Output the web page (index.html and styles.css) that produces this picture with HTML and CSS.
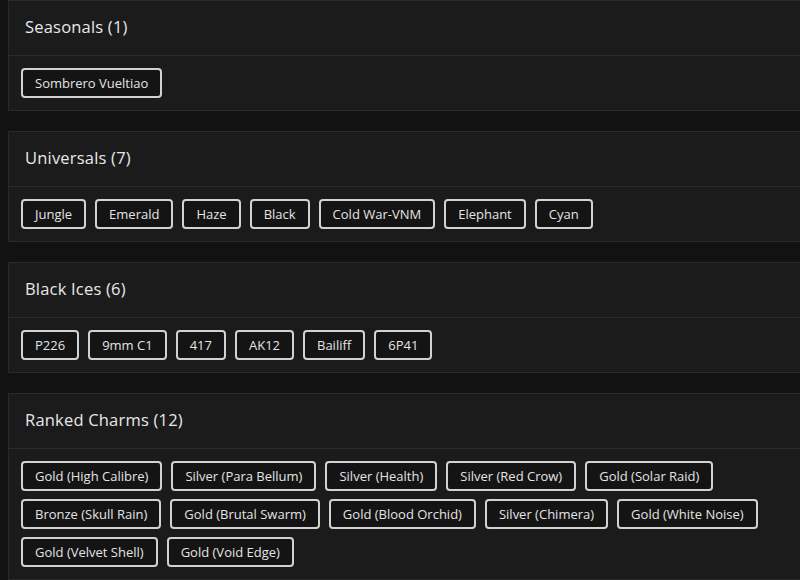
FILE: index.html
```html
<!DOCTYPE html>
<html lang="en">
<head>
<meta charset="utf-8">
<title>Collections</title>
<link rel="stylesheet" href="styles.css">
</head>
<body>
<div class="page">
  <section class="card">
    <div class="card-head"><h2 class="card-title">Seasonals (1)</h2></div>
    <div class="card-body">
      <span class="chip">Sombrero Vueltiao</span>
    </div>
  </section>
  <section class="card">
    <div class="card-head"><h2 class="card-title">Universals (7)</h2></div>
    <div class="card-body">
      <span class="chip">Jungle</span>
      <span class="chip">Emerald</span>
      <span class="chip">Haze</span>
      <span class="chip">Black</span>
      <span class="chip">Cold War-VNM</span>
      <span class="chip">Elephant</span>
      <span class="chip">Cyan</span>
    </div>
  </section>
  <section class="card">
    <div class="card-head"><h2 class="card-title">Black Ices (6)</h2></div>
    <div class="card-body">
      <span class="chip">P226</span>
      <span class="chip">9mm C1</span>
      <span class="chip">417</span>
      <span class="chip">AK12</span>
      <span class="chip">Bailiff</span>
      <span class="chip">6P41</span>
    </div>
  </section>
  <section class="card">
    <div class="card-head"><h2 class="card-title">Ranked Charms (12)</h2></div>
    <div class="card-body">
      <span class="chip">Gold (High Calibre)</span>
      <span class="chip">Silver (Para Bellum)</span>
      <span class="chip">Silver (Health)</span>
      <span class="chip">Silver (Red Crow)</span>
      <span class="chip">Gold (Solar Raid)</span>
      <span class="chip">Bronze (Skull Rain)</span>
      <span class="chip">Gold (Brutal Swarm)</span>
      <span class="chip">Gold (Blood Orchid)</span>
      <span class="chip">Silver (Chimera)</span>
      <span class="chip">Gold (White Noise)</span>
      <span class="chip">Gold (Velvet Shell)</span>
      <span class="chip">Gold (Void Edge)</span>
    </div>
  </section>
</div>
</body>
</html>
```

FILE: styles.css
```css
html, body {
  margin: 0;
  padding: 0;
  background: #121212;
  overflow: hidden;
}
body {
  font-family: "Open Sans", "DejaVu Sans", sans-serif;
  color: #e6e6e6;
}
.page {
  width: 800px;
  padding-left: 8px;
  display: flex;
  flex-direction: column;
  gap: 20px;
}
.card {
  width: 800px;
  background: #1b1b1b;
  border: 1px solid #2a2a2a;
  box-sizing: border-box;
}
.card-head {
  height: 55px;
  box-sizing: border-box;
  display: flex;
  align-items: center;
  padding: 0 16px 3px;
  border-bottom: 1px solid #2c2c2c;
}
.card-title {
  margin: 0;
  font-size: 16.5px;
  font-weight: 500;
  letter-spacing: 0.2px;
  color: #e8e8e8;
}
.card-body {
  padding: 12px;
  display: flex;
  flex-wrap: wrap;
  column-gap: 9px;
  row-gap: 8px;
}
.chip {
  display: inline-flex;
  align-items: center;
  height: 30px;
  box-sizing: border-box;
  padding: 0 12px;
  border: 2px solid #d2d2d2;
  border-radius: 4px;
  background: #141414;
  font-size: 13px;
  color: #e4e4e4;
}
```
